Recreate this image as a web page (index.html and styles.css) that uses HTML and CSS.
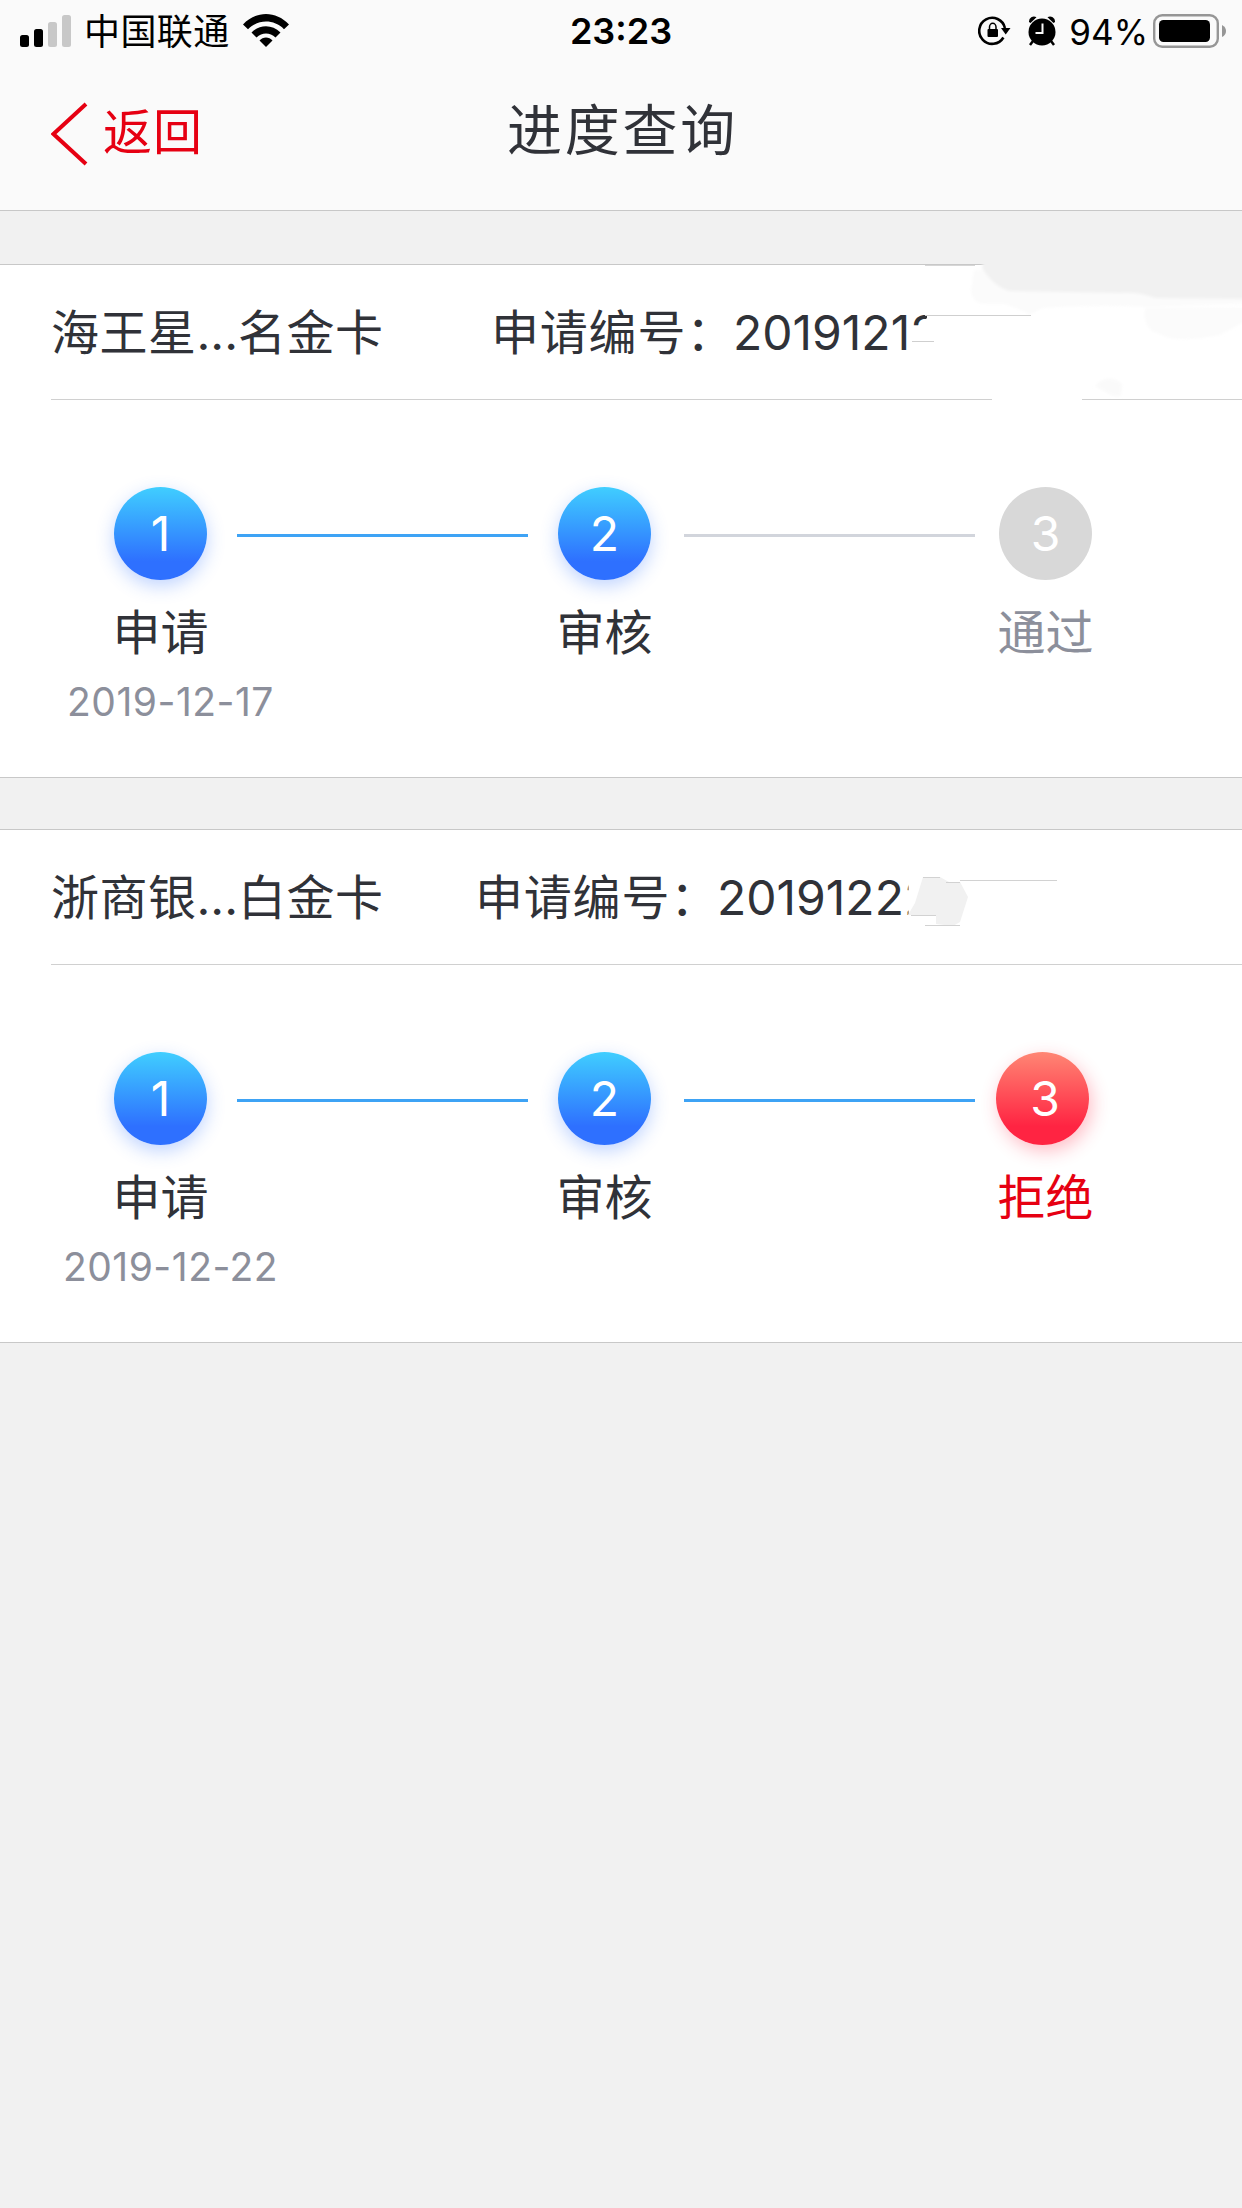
FILE: index.html
```
<!DOCTYPE html>
<html lang="zh-CN">
<head>
  <meta charset="UTF-8">
  <meta name="viewport" content="width=device-width, initial-scale=1.0">
  <title>进度查询</title>
  <link rel="stylesheet" href="styles.css">
</head>
<body>
<!-- Header -->
<header class="header">
  <div class="status-bar">
    <div class="status-left">
      <svg class="signal" width="52" height="32" viewBox="0 0 52 32">
        <rect x="0" y="20" width="9" height="12" rx="2.5" fill="#000"/>
        <rect x="14" y="14" width="9" height="18" rx="2.5" fill="#000"/>
        <rect x="28" y="7" width="9" height="25" rx="2.5" fill="#c8c8c8"/>
        <rect x="42" y="0" width="9" height="32" rx="2.5" fill="#c8c8c8"/>
      </svg>
      <span class="carrier">中国联通</span>
      <svg class="wifi" width="46" height="34" viewBox="0 0 46 34">
        <path d="M0 10.500C13-3.500 33-3.500 46 10.500L41 15.200C31 5 15 5 5 15.200Z"/>
        <path d="M8.500 18.500C17 10 29 10 37.500 18.500L32.500 23.500C27 18 19 18 13.500 23.500Z"/>
        <path d="M16.500 26.500C20 22.500 26 22.500 29.500 26.500L23 33Z"/>
      </svg>
    </div>
    <div class="time">23:23</div>
    <div class="status-right">
      <svg class="lock" width="33" height="30" viewBox="0 0 33 30">
        <path d="M25.400 21.500A13 13 0 1 1 26.900 12" fill="none" stroke="#000" stroke-width="2.600"/>
        <path d="M23 12H32.500L27.700 18.500Z"/>
        <rect x="9.500" y="13" width="10.500" height="8" rx="1"/>
        <path d="M11.500 14V11A3.200 3.600 0 0 1 18 11V14" fill="none" stroke="#000" stroke-width="1.500"/>
      </svg>
      <svg class="alarm" width="28" height="30" viewBox="0 0 28 30">
        <circle cx="14" cy="16" r="13.500"/>
        <path d="M1 6A5 5 0 0 1 8.500 1.200L2.500 7Z"/>
        <path d="M27 6A5 5 0 0 0 19.500 1.200L25.500 7Z"/>
        <path d="M5 25L2 29M23 25L26 29" stroke="#000" stroke-width="2.500"/>
        <path d="M14.500 7.500V17H7.500" fill="none" stroke="#fafafa" stroke-width="2"/>
      </svg>
      <span class="percent">94%</span>
      <svg class="battery" width="74" height="34" viewBox="0 0 74 34">
        <rect x="1.200" y="1.200" width="63.600" height="31.600" rx="8" fill="none" stroke="#969696" stroke-width="2.400"/>
        <rect x="6" y="6" width="51" height="22" rx="4.500"/>
        <path d="M69 11Q73 13 73 17T69 23Z" fill="#969696"/>
      </svg>
    </div>
  </div>
  <div class="nav">
    <a class="back">
      <svg width="37" height="64" viewBox="0 0 37 64">
        <path d="M35 2L2.500 32L35 62" fill="none" stroke="#e60012" stroke-width="4"/>
      </svg>
      <span>返回</span>
    </a>
    <h1 class="title">进度查询</h1>
  </div>
</header>

<!-- Application list -->
<main class="list">
  <section class="card">
    <div class="card-head">
      <span class="card-name">海王星<span class="dots">...</span>名金卡</span>
      <span class="card-label">申请编号：</span>
      <span class="card-number">20191212</span>
    </div>
    <div class="steps">
      <div class="step">
        <div class="circle blue">1</div>
        <div class="step-name">申请</div>
        <div class="step-date">2019-12-17</div>
      </div>
      <div class="line blue-line"></div>
      <div class="step">
        <div class="circle blue">2</div>
        <div class="step-name">审核</div>
      </div>
      <div class="line second-line"></div>
      <div class="step">
        <div class="circle">3</div>
        <div class="step-name muted">通过</div>
      </div>
    </div>
    <!-- Masked part of the number -->
    <svg class="mask" width="402" height="180" viewBox="840 240 402 180">
      <defs>
        <filter id="soft" x="-10%" y="-20%" width="120%" height="140%">
          <feGaussianBlur stdDeviation="1.500"/>
        </filter>
      </defs>
      <path d="M909 326H918L927 318V310H960V355H909Z" fill="#fff"/>
      <path d="M992 396H1082V402H992Z" fill="#fff"/>
      <g filter="url(#soft)">
        <path d="M974 270L971 290Q972 303 984 304L1005 304Q1018 308 1030 315L1042 308Q1100 304 1148 307L1260 303V270Z" fill="#fbfbfb"/>
        <path d="M984 255H1260V299L1155 298Q1140 292 1120 293L1010 291Q995 288 982 268Z" fill="#f1f1f1"/>
        <path d="M1145 308H1260V323H1242L1220 335Q1175 344 1160 334Q1142 330 1145 308Z" fill="#fbfbfb"/>
        <path d="M1095 386Q1108 372 1122 384L1121 396H1113Z" fill="#fafafa"/>
      </g>
      <path d="M925 265H975" stroke="#c8c8c8" stroke-width="1.500"/>
      <path d="M925 315.500H1031M912 341.500H934" stroke="#cfcfcf"/>
    </svg>
  </section>

  <section class="card">
    <div class="card-head second">
      <span class="card-name">浙商银<span class="dots">...</span>白金卡</span>
      <span class="card-label">申请编号：</span>
      <span class="card-number">20191222</span>
    </div>
    <div class="steps">
      <div class="step">
        <div class="circle blue">1</div>
        <div class="step-name">申请</div>
        <div class="step-date">2019-12-22</div>
      </div>
      <div class="line blue-line"></div>
      <div class="step">
        <div class="circle blue">2</div>
        <div class="step-name">审核</div>
      </div>
      <div class="line second-line blue-line"></div>
      <div class="step">
        <div class="circle red">3</div>
        <div class="step-name refused">拒绝</div>
      </div>
    </div>
    <svg class="mask" width="402" height="180" viewBox="840 805 402 180">
      <path d="M908.500 870H970V930H908.500Z" fill="#fff"/>
      <path d="M923 877H940L949 882H960L968 897L960 922L953 926L936 924V915H908L915 903Z" fill="#f1f1f1"/>
      <path d="M923 877.500H940M946 882.500H960M960 880.500H1057M911 915.500H936M925 925.500H960" stroke="#d2d2d2"/>
    </svg>
  </section>
</main>
</body>
</html>
```

FILE: styles.css
```
body {
  margin: 0;
  background-color: #f1f1f1;
  color: #303238;
  font-family: Inter, "Noto Sans CJK SC", sans-serif;
}
svg {
  display: block;
}

/* Header */
.header {
  box-sizing: border-box;
  height: 211px;
  background: #fafafa;
  border-bottom: 1px solid #c8c8c8;
}
.status-bar {
  display: grid;
  grid-template-columns: 1fr auto 1fr;
  height: 60px;
  padding: 0 15px 0 20px;
  color: #000;
  font-size: 36px;
  line-height: 60px;
}
.status-left,
.status-right {
  display: flex;
  align-items: center;
}
.status-right {
  justify-content: flex-end;
}
.carrier {
  margin-left: 12px;
  padding-top: 2px;
  letter-spacing: 0.400px;
}
.wifi {
  margin-left: 13px;
}
.time {
  font-weight: 600;
  padding: 1px 5px 0 0;
}
.alarm {
  margin: 0 13px 0 17px;
}
.percent {
  padding-top: 1px;
  font-size: 35px;
}
.battery {
  margin-left: 5px;
}
.nav {
  display: grid;
  grid-template-columns: 1fr auto 1fr;
  align-items: center;
  height: 148px;
  padding: 0 51px;
}
.back {
  display: flex;
  align-items: center;
  gap: 15px;
  color: #e60012;
  font-size: 49px;
  letter-spacing: 1px;
}
.back span {
  margin-top: -12px;
}
.title {
  margin: -16px 0 0 3px;
  font-size: 55px;
  font-weight: 400;
  letter-spacing: 2.700px;
}

/* Cards */
.list {
  display: flex;
  flex-direction: column;
  gap: 51px;
  padding-top: 53px;
}
.card {
  position: relative;
  box-sizing: border-box;
  height: 514px;
  background: #fff;
  border-top: 1px solid #c8c8c8;
  border-bottom: 1px solid #c8c8c8;
}
.card-head {
  display: flex;
  height: 134px;
  margin-left: 51px;
  border-bottom: 1px solid #d0d0d0;
  font-size: 48px;
  line-height: 136px;
  white-space: nowrap;
}
.card-name {
  width: 440px;
  letter-spacing: 0.500px;
}
.dots {
  letter-spacing: 0;
}
.second .card-name {
  width: 424px;
}
.card-label {
  width: 242px;
  letter-spacing: 0.800px;
}

/* Progress steps */
.steps {
  display: flex;
  padding: 87px 0 0 114px;
}
.step {
  display: flex;
  flex-direction: column;
  align-items: center;
  width: 93px;
}
.circle {
  width: 93px;
  height: 93px;
  border-radius: 50%;
  background: #d8d8d8;
  color: #fff;
  font-size: 48px;
  line-height: 94px;
  text-align: center;
}
.blue {
  background: linear-gradient(#40ceff, #2e70ff 80%);
  box-shadow: 0 6px 18px rgba(46, 112, 255, 0.3);
}
.red {
  box-sizing: border-box;
  margin-left: -6px;
  padding-left: 5px;
  background: linear-gradient(#ff8674, #ff2442 80%);
  box-shadow: 3px 6px 18px rgba(255, 36, 66, 0.3);
}
.line {
  width: 291px;
  height: 3px;
  margin: 47px 30px 0;
  background: #d2d5dc;
}
.second-line {
  margin: 47px 24px 0 33px;
}
.blue-line {
  background: #3ea3f5;
}
.step-name {
  margin-top: 17px;
  font-size: 48px;
  line-height: 72px;
  white-space: nowrap;
}
.muted {
  color: #8c8f9b;
}
.refused {
  color: #e60012;
}
.step-date {
  margin: 8px 0 0 20px;
  color: #8c8f9b;
  font-size: 39px;
  line-height: 50px;
  letter-spacing: 0.500px;
  white-space: nowrap;
}

/* Smudges over the hidden digits */
.mask {
  position: absolute;
  top: -25px;
  right: 0;
}
```
